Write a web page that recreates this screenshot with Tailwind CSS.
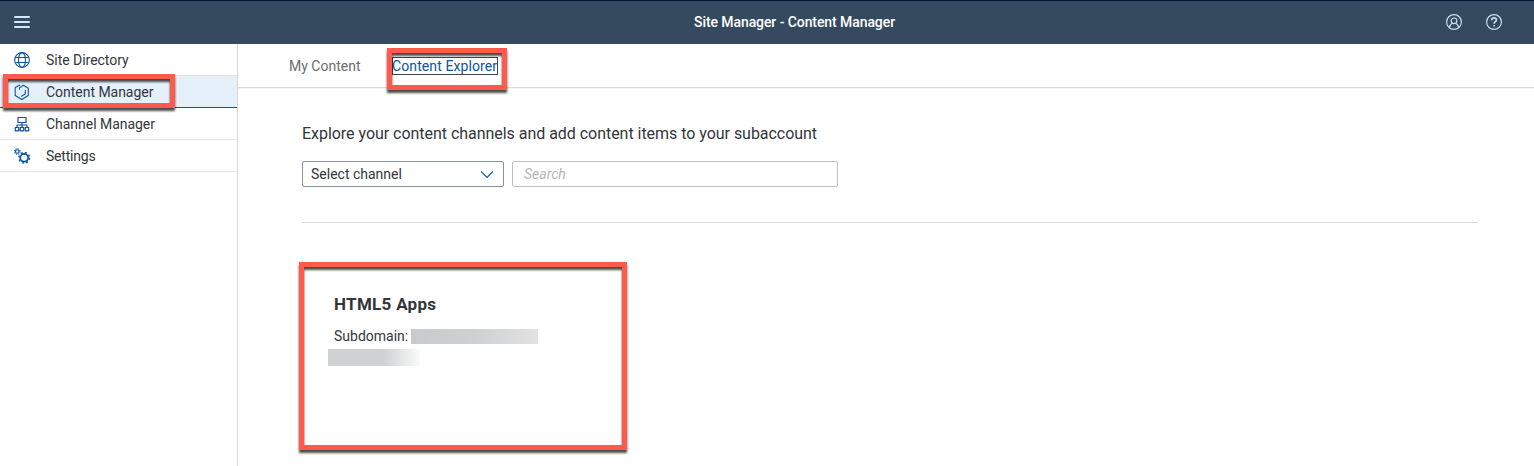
<!DOCTYPE html>
<html lang="en">
<head>
<meta charset="utf-8">
<title>Site Manager - Content Manager</title>
<script src="https://cdn.jsdelivr.net/npm/@tailwindcss/browser@4"></script>
</head>
<body class="flex h-[466px] w-[1534px] flex-col overflow-hidden bg-white font-['Roboto',sans-serif] text-[14px] leading-5 text-[#32363a]">
<header class="grid h-11 shrink-0 grid-cols-[680px_1fr_auto] items-center border-t border-[#04163a] bg-[#354a5f] pl-3.5 pr-8">
  <svg class="h-4 w-4" viewBox="0 0 16 16" fill="none" stroke="#d1e8ff" stroke-width="2" stroke-linecap="round"><path d="M1 2h14M1 7h14M1 12h14"/></svg>
  <h1 class="pb-0.5 font-medium tracking-[-0.08px] text-white"><span>Site Manager - Content Manager</span></h1>
  <div class="flex justify-end gap-6 pb-px text-[#c4dbf2]">
    <svg class="h-4 w-4" viewBox="0 0 16 16" fill="none" stroke="currentColor" stroke-width="1.2"><circle cx="8" cy="8" r="7.4"/><circle cx="8" cy="6.8" r="2.8"/><path d="M3.4 13.6c.5-2.3 1.7-3.7 3-4.5M12.6 13.6c-.5-2.3-1.7-3.7-3-4.5"/></svg>
    <svg class="h-4 w-4" viewBox="0 0 16 16" fill="none" stroke="currentColor"><circle cx="8" cy="8" r="7.4" stroke-width="1.2"/><path stroke-width="1.6" d="M5.7 6.2c0-1.5 1-2.3 2.4-2.3s2.3.8 2.3 2c0 1.7-2.3 1.8-2.3 3.8M8.1 11v1.6"/></svg>
  </div>
</header>
<div class="flex min-h-0 flex-1">
  <nav class="w-[238px] shrink-0 border-r border-[#d9d9d9] tracking-[-0.03px]">
    <a class="flex h-8 items-center gap-4 border-b border-[#e5e5e5] pl-3.5">
      <svg class="h-4 w-4" viewBox="0 0 16 16" fill="none" stroke="#0854a0" stroke-width="1.1"><circle cx="8" cy="8" r="7.4"/><ellipse cx="8" cy="8" rx="3.5" ry="7.4"/><path d="M1.5 5.5h13M1.5 10.5h13"/></svg>
      <span>Site Directory</span>
    </a>
    <a class="relative flex h-8 items-center gap-4 border-b border-[#0854a0] bg-[#e5f0fa] pl-3.5">
      <svg class="h-4 w-4" viewBox="0 0 16 16" fill="none" stroke="#0854a0" stroke-width="1.1" stroke-linejoin="round" stroke-linecap="round"><path d="M5.8 1 1.2 3.6v7.9l6.6 4 6.5-4V4.2L9.500 1.300 5.500 3.700v1.600M7.500 12.200l3.800-2.200V6.200"/></svg>
      <span>Content Manager</span>
      <span class="absolute -top-0.5 left-[3px] h-[34px] w-[172px] border-5 border-[#ff5a4c] drop-shadow-[0_3px_1px_rgba(0,0,0,0.7)]"></span>
    </a>
    <a class="flex h-8 items-center gap-4 border-b border-[#e5e5e5] pl-3.5">
      <svg class="h-4 w-4" viewBox="0 0 16 16" fill="none" stroke="#0854a0" stroke-width="1.2" stroke-linejoin="round"><path d="M4 1.5h8v5H4zM8 6.5v5M3 11.5V9h10v2.5M1.3 11.5h3.4v3.3H1.3zM6.3 11.5h3.4v3.3H6.3zM11.3 11.5h3.4v3.3h-3.4z"/></svg>
      <span>Channel Manager</span>
    </a>
    <a class="flex h-8 items-center gap-4 border-b border-[#e5e5e5] pl-3.5">
      <svg class="h-4 w-4 overflow-visible" viewBox="0 0 16 16" fill="none" stroke="#0854a0"><circle cx="10.2" cy="9.8" r="3.9" stroke-width="1.7"/><circle cx="10.2" cy="9.8" r="5.3" stroke-width="1.5" stroke-dasharray="2 2.16"/><circle cx="3.3" cy="3.5" r="1.8" stroke-width="1.1"/><circle cx="3.3" cy="3.5" r="2.8" stroke-width="1.1" stroke-dasharray="1.1 1.1"/></svg>
      <span class="tracking-[-0.2px]">Settings</span>
    </a>
  </nav>
  <main class="min-w-0 flex-1">
    <div class="flex h-11 items-start gap-8 border-b border-[#d9d9d9] pl-[51px] pt-3 shadow-[0_1px_1px_rgba(0,0,0,0.04)]">
      <a class="w-[71px] whitespace-nowrap text-[#6a6d70]">My Content</a>
      <a class="relative w-[105px] whitespace-nowrap tracking-[0.1px] text-[#0854a0]"><span>Content Explorer</span>
        <span class="absolute left-0 top-px h-[18px] w-[106px] border border-[#444]"></span>
        <span class="absolute -left-[5px] -top-2 h-[42px] w-[120px] border-5 border-[#ff5a4c] drop-shadow-[0_3px_1px_rgba(0,0,0,0.7)]"></span>
      </a>
    </div>
    <section class="pl-16 pr-14 pt-9">
      <h2 class="text-base leading-5 tracking-[-0.035px]"><span>Explore your content channels and add content items to your subaccount</span></h2>
      <div class="mt-[17px] flex gap-2">
        <div class="flex h-[26px] w-[202px] items-center justify-between rounded-[2px] border border-[#89919a] pl-2 pr-2.5">
          <span>Select channel</span>
          <svg class="h-3 w-3" viewBox="0 0 12 12" fill="none" stroke="#0854a0" stroke-width="1.1"><path d="M0 3.5l6 6 6-6"/></svg>
        </div>
        <div class="flex h-[26px] w-[326px] items-center rounded-[2px] border border-[#bfbfc3] pl-[11px] italic text-[#b4b6b8]"><span>Search</span></div>
      </div>
      <hr class="mt-[35px] border-[#d9d9d9]">
      <article class="relative -ml-[3px] mt-[39px] h-[188px] w-[328px] pl-[35px] pt-8">
        <span class="absolute inset-0 border-5 border-[#ff5a4c] drop-shadow-[0_3px_1px_rgba(0,0,0,0.7)]"></span>
        <h3 class="text-[17px] font-bold leading-5 tracking-[0.3px]"><span>HTML5 Apps</span></h3>
        <div class="mt-3 flex items-center gap-1">
          <span class="w-[73px] whitespace-nowrap">Subdomain:</span>
          <span class="h-[15px] w-[127px] bg-linear-to-r from-[#c9cacc] via-[#cfd0d2] to-[#e2e2e2]"></span>
        </div>
        <div class="-ml-1.5 mt-[3px] h-[17px] w-[92px] bg-linear-to-r from-[#cfd1d2] from-60% to-[#fafafa]"></div>
      </article>
    </section>
  </main>
</div>
</body>
</html>
